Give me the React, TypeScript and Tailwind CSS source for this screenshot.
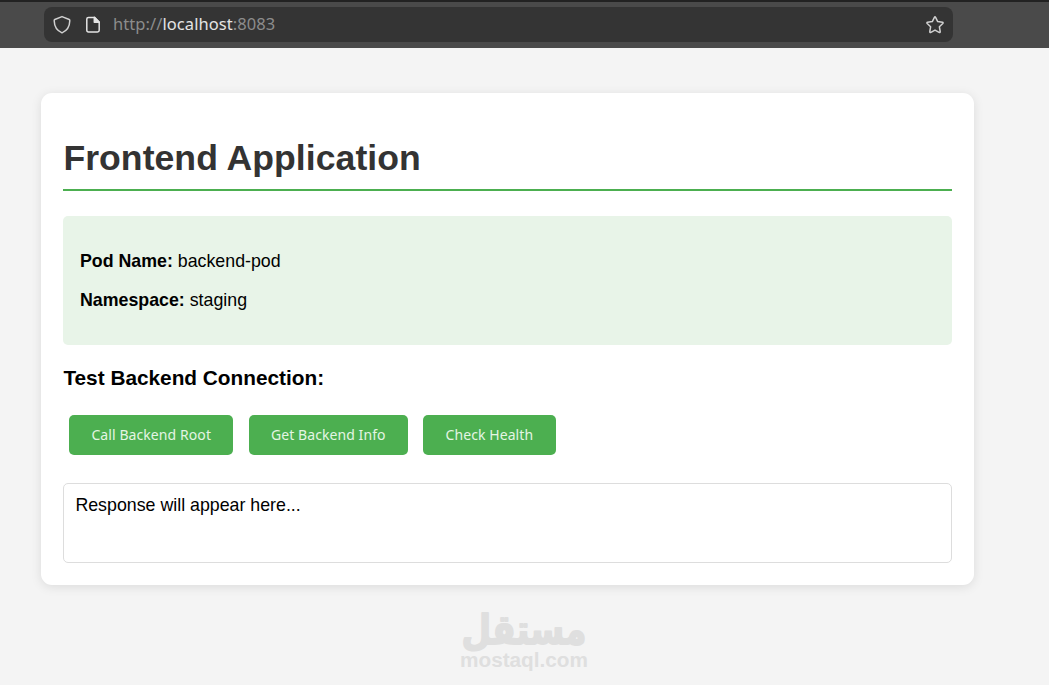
const actions = [
  { label: "Call Backend Root", width: "w-[164.5px]" },
  { label: "Get Backend Info", width: "w-[159px]" },
  { label: "Check Health", width: "w-[132.5px]" },
];

const ShieldIcon = () => (
  <svg className="h-5 w-5" viewBox="0 0 20 20" fill="none" stroke="#d0d0d0" strokeWidth="1.5" strokeLinejoin="round">
    <path d="M10 1.6 L17.2 4.5 Q17.9 4.8 17.8 5.8 Q17.6 14.6 10 17.9 Q2.4 14.6 2.2 5.8 Q2.1 4.8 2.8 4.5 Z" />
  </svg>
);

const PageIcon = () => (
  <svg className="h-5 w-5" viewBox="0 0 20 20" fill="none" stroke="#e4e4e4" strokeWidth="1.5" strokeLinejoin="round">
    <path d="M5.5 2.4 H11.5 L16.2 7.1 V15.3 Q16.2 17 14.5 17 H5.5 Q3.8 17 3.8 15.3 V4.1 Q3.8 2.4 5.5 2.4 Z" />
    <path d="M11.3 2.4 V7.3 H16.2 Z" fill="#e4e4e4" />
  </svg>
);

const StarIcon = () => (
  <svg className="h-5 w-5" viewBox="0 0 20 20" fill="none" stroke="#d0d0d0" strokeWidth="1.5" strokeLinejoin="round">
    <path d="M9.4 2.4 Q10 1.3 10.6 2.4 L12.7 6.6 L17.4 7.3 Q18.6 7.6 17.8 8.5 L14.4 11.8 L15.2 16.5 Q15.3 17.8 14.1 17.3 L10 15.1 L5.9 17.3 Q4.7 17.8 4.8 16.5 L5.6 11.8 L2.2 8.5 Q1.4 7.6 2.6 7.3 L7.3 6.6 Z" />
  </svg>
);

const AddressBar = () => (
  <header className="h-12 border-t-2 border-[#222222] bg-[#4a4a4a] pt-[5px] pl-[44px]">
    <div className="flex h-[35px] w-[909px] items-center rounded-lg bg-[#343434] pr-2 pl-2">
      <ShieldIcon />
      <div className="ml-[11px]">
        <PageIcon />
      </div>
      <span className="ml-[10px] flex-1 font-['Noto_Sans',sans-serif] text-[16.5px] tracking-[0.07px] text-[#8c8c8c]">
        http://<span className="text-[#e4e4e4]">localhost</span>:8083
      </span>
      <StarIcon />
    </div>
  </header>
);

const Watermark = () => (
  <svg className="mt-[15px] ml-[458px] h-[74px] w-[132px] overflow-visible" viewBox="0 0 132 74" fill="#dfdfdf">
    <text
      x="3.5"
      y="37"
      textLength="125"
      lengthAdjust="spacingAndGlyphs"
      transform="translate(0 1.5) scale(1 1.15)"
      stroke="#dfdfdf"
      strokeWidth="1.6"
      strokeLinejoin="round"
      className="font-['DejaVu_Sans',sans-serif] text-[36px] font-bold"
    >
      مستقل
    </text>
    <text
      x="2"
      y="67"
      textLength="128"
      lengthAdjust="spacingAndGlyphs"
      className="font-['Liberation_Sans',sans-serif] text-[20px] font-bold"
    >
      mostaql.com
    </text>
  </svg>
);

const App = () => (
  <div className="h-[685px] overflow-hidden bg-[#f4f4f4] font-['Liberation_Sans',Arial,sans-serif] text-black">
    <AddressBar />

    <main className="mt-[45px] ml-[41px] h-[492px] w-[933px] rounded-[11px] bg-white pt-[43px] pr-[22px] pl-[22.4px] shadow-[0_2px_11px_rgba(0,0,0,0.1)]">
      <h1 className="h-[55px] border-b-2 border-[#4caf50] text-[35.6px] leading-[45px] font-bold tracking-[0.05px] text-[#333333]">
        Frontend Application
      </h1>

      {/* Pod info */}
      <section className="mt-[25px] flex h-[129px] flex-col gap-[19px] rounded-[5px] bg-[#e8f4e8] px-[16.6px] pt-[34.5px] text-[17.8px] leading-5">
        <p>
          <strong>Pod Name:</strong> backend-pod
        </p>
        <p>
          <strong>Namespace:</strong> staging
        </p>
      </section>

      <h3 className="mt-[21px] text-[20.8px] leading-6 font-bold">Test Backend Connection:</h3>

      <div className="mt-[24.6px] flex gap-[15.3px] pl-[5.6px]">
        {actions.map((action) => (
          <button
            key={action.label}
            className={`${action.width} h-10 rounded-[5px] bg-[#4caf50] pb-px font-['Noto_Sans',sans-serif] text-[14px] tracking-[0.08px] text-[#e4f5e4]`}
          >
            {action.label}
          </button>
        ))}
      </div>

      <div className="mt-[28px] h-20 rounded-[5px] border border-[#dddddd] px-[11px] pt-[11px] text-[17.8px] leading-5">
        Response will appear here...
      </div>
    </main>

    <Watermark />
  </div>
);

export default App;
